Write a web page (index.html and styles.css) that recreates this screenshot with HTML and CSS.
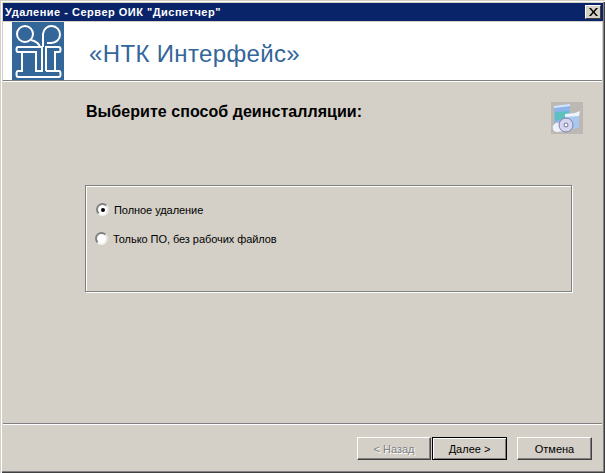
FILE: index.html
```html
<!DOCTYPE html>
<html lang="ru">
<head>
    <meta charset="UTF-8">
    <meta name="viewport" content="width=device-width, initial-scale=1.0">
    <title>Удаление - Сервер ОИК "Диспетчер"</title>
    <link rel="stylesheet" href="styles.css">
</head>
<body>
    <div class="window">
        <div class="titlebar">
            <span class="title-text">Удаление - Сервер ОИК "Диспетчер"</span>
            <button class="close-btn" aria-label="Закрыть">
                <svg width="9" height="8" viewBox="0 0 9 8"><path d="M0 0h2l2.500 3 2.500-3h2l-3.500 4 3.500 4h-2l-2.500-3-2.500 3h-2l3.500-4z" fill="#000"/></svg>
            </button>
        </div>
        <div class="banner">
            <svg class="logo" width="52" height="58" viewBox="0 0 52 58">
                <rect width="52" height="58" fill="#336699"/>
                <g fill="none" stroke="#fff" stroke-width="2">
                    <circle cx="13" cy="12" r="8"/>
                    <path d="M19 18c4 1 8 3 9 7"/>
                    <path d="M31 25V12a8.500 8.500 0 1 1 8.500 9H35"/>
                    <path d="M6 25H30V49H24V30H10V49H6c-2 0-2 6 0 6H47c2 0 2-6 0-6H43V30h4c2 0 2-5 0-5H34V49"/>
                    <path d="M10 30H6c-2 0-2-5 0-5"/>
                    <path d="M34 49h9"/>
                </g>
            </svg>
            <span class="brand">«НТК Интерфейс»</span>
        </div>
        <div class="banner-rule"></div>
        <div class="content">
            <div class="heading-row">
                <h1 class="heading">Выберите способ деинсталляции:</h1>
                <svg class="pkg-icon" width="32" height="32" viewBox="0 0 32 32">
                    <rect width="32" height="32" fill="#bcb9b4"/>
                    <path d="M3 4l16-2v15l-16 4z" fill="#8fb4e8"/>
                    <path d="M4 10l14-1v6l-14 4z" fill="#5fc0c0"/>
                    <path d="M3 4l16-2v2l-16 2z" fill="#d8e6fa"/>
                    <path d="M15 14l13-2v13l-11 4-2-3z" fill="#a8c8f0"/>
                    <path d="M14 12l10-1 5-2-1 5-14 1z" fill="#eef4fc"/>
                    <path d="M2 24c1-3 5-4 8-3l3 8-7 1c-3 0-5-3-4-6z" fill="#eef2fa"/>
                    <circle cx="15" cy="23" r="7" fill="#d6d6ee" stroke="#8080b0"/>
                    <circle cx="15" cy="23" r="2" fill="#fff" stroke="#7070a0"/>
                </svg>
            </div>
            <div class="group">
                <label class="option first">
                    <span class="radio checked"></span>
                    <span>Полное удаление</span>
                </label>
                <label class="option second">
                    <span class="radio"></span>
                    <span>Только ПО, без рабочих файлов</span>
                </label>
            </div>
        </div>
        <div class="footer-rule"></div>
        <div class="footer">
            <button class="btn disabled">&lt; Назад</button>
            <button class="btn default">Далее &gt;</button>
            <button class="btn cancel">Отмена</button>
        </div>
    </div>
</body>
</html>
```
FILE: styles.css
```css
* {
    box-sizing: border-box;
}
body {
    margin: 0;
    background-color: #d4d0c8;
}
.window {
    width: 605px;
    height: 473px;
    padding: 3px 3px 2px 3px;
    display: flex;
    flex-direction: column;
    background-color: #d4d0c8;
    box-shadow: inset 1px 1px 0 #d4d0c8, inset 2px 2px 0 #fff, inset -1px -1px 0 #404040, inset -2px -2px 0 #808080;
    font-family: "Liberation Sans", Arial, sans-serif;
}
.titlebar {
    height: 18px;
    flex: none;
    margin-right: -1px;
    padding: 0 2px 0 2px;
    display: flex;
    align-items: center;
    justify-content: space-between;
    background-color: #0a246a;
    color: #fff;
}
.title-text {
    font-size: 11px;
    font-weight: bold;
    letter-spacing: 0.5px;
}
.close-btn {
    width: 16px;
    height: 14px;
    padding: 0;
    display: flex;
    align-items: center;
    justify-content: center;
    background-color: #d4d0c8;
    border: 1px solid;
    border-color: #fff #404040 #404040 #fff;
}
.banner {
    height: 58px;
    flex: none;
    margin-top: 1px;
    padding-left: 9px;
    display: flex;
    align-items: center;
    background-color: #fff;
}
.logo {
    flex: none;
}
.brand {
    margin-left: 25px;
    padding-top: 6px;
    font-size: 24px;
    letter-spacing: 0.35px;
    color: #336699;
}
.banner-rule {
    height: 2px;
    flex: none;
    background-color: #808080;
    border-bottom: 1px solid #fff;
}
.content {
    flex: 1;
    padding-left: 82px;
}
.heading-row {
    width: 498px;
    height: 53px;
    padding-top: 20px;
    display: flex;
    justify-content: space-between;
}
.heading {
    margin: 0 0 0 1px;
    font-size: 16px;
    line-height: 20px;
    font-weight: bold;
    letter-spacing: 0.05px;
    color: #000;
}
.pkg-icon {
    flex: none;
}
.group {
    width: 487px;
    height: 107px;
    margin-top: 50px;
    padding-top: 17px;
    display: flex;
    flex-direction: column;
    gap: 16px;
    border: 1px solid #808080;
    box-shadow: inset 1px 1px 0 #fff, 1px 1px 0 #fff;
}
.option {
    height: 13px;
    display: flex;
    align-items: center;
    gap: 5px;
    font-size: 11px;
    letter-spacing: -0.06px;
    color: #000;
}
.option.first {
    padding-left: 10px;
}
.option.second {
    padding-left: 9px;
}
.radio {
    width: 13px;
    height: 13px;
    flex: none;
    display: flex;
    align-items: center;
    justify-content: center;
    border-radius: 50%;
    background-color: #fff;
    border: 2px solid;
    border-color: #808080 #e8e6e2 #f4f3f0 #808080;
}
.radio.checked::after {
    content: "";
    width: 4px;
    height: 4px;
    border-radius: 50%;
    background-color: #000;
}
.footer-rule {
    height: 2px;
    flex: none;
    background-color: #808080;
    border-bottom: 1px solid #fff;
}
.footer {
    height: 46px;
    flex: none;
    padding: 12px 9px 0 354px;
    display: flex;
    align-items: flex-start;
}
.btn {
    width: 75px;
    height: 23px;
    padding: 0;
    font-family: "Liberation Sans", Arial, sans-serif;
    font-size: 11px;
    color: #000;
    background-color: #d4d0c8;
    border: 1px solid;
    border-color: #fff #404040 #404040 #fff;
    box-shadow: inset -1px -1px 0 #808080;
}
.btn.disabled {
    width: 74px;
    margin-right: 1px;
    color: #808080;
    text-shadow: 1px 1px 0 #fff;
}
.btn.default {
    margin-right: 10px;
    border: 1px solid #000;
    box-shadow: inset 1px 1px 0 #fff, inset -1px -1px 0 #808080;
}
```
